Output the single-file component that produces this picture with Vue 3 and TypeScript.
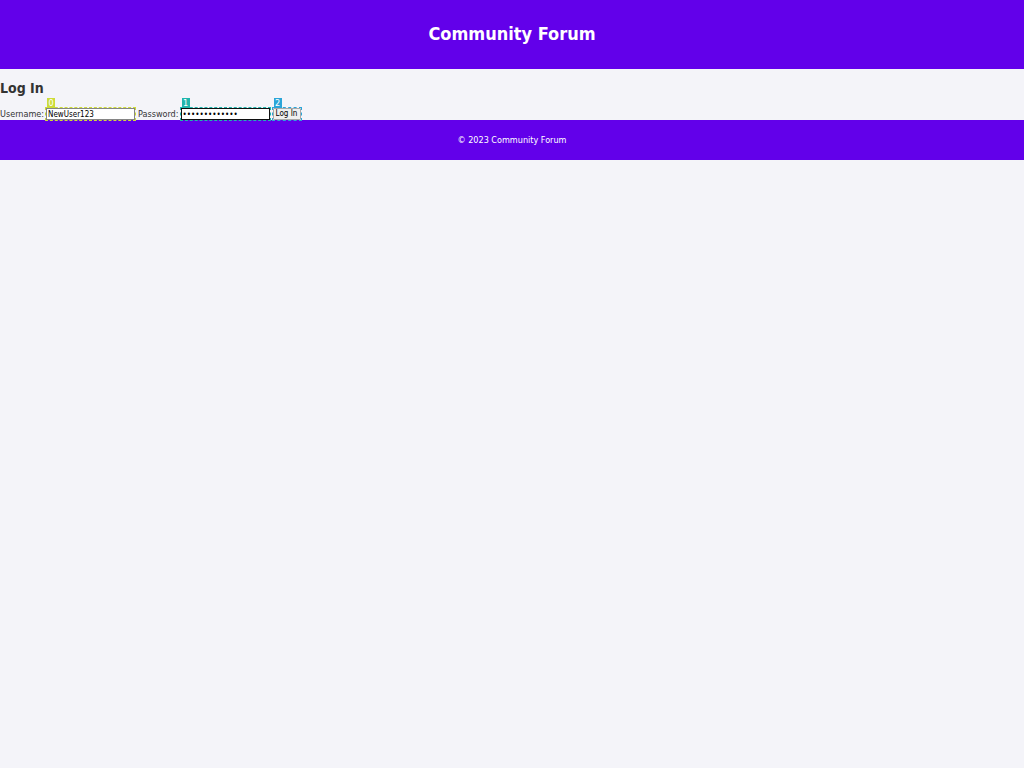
<script setup lang="ts">
import { ref } from 'vue'

const username = ref('NewUser123')
const password = ref('NewPassword12')
</script>

<template>
  <div class="page">
    <header class="banner">
      <h1>Community Forum</h1>
    </header>
    <main>
      <h2>Log In</h2>
      <form class="login" @submit.prevent>
        <label for="username">Username:</label>
        <span class="mark lime">
          <span class="tag">0</span>
          <input id="username" v-model="username" type="text" />
        </span>
        <label for="password">Password:</label>
        <span class="mark teal">
          <span class="tag">1</span>
          <input id="password" v-model="password" class="active" type="password" />
        </span>
        <span class="mark blue">
          <span class="tag">2</span>
          <button type="submit">Log In</button>
        </span>
      </form>
    </main>
    <footer class="banner foot">
      <p>© 2023 Community Forum</p>
    </footer>
  </div>
</template>

<style>
body {
  margin: 0;
  background: #f4f4f9;
}
</style>

<style scoped>
.page {
  font-family: "DejaVu Sans Condensed", "DejaVu Sans", sans-serif;
  font-stretch: condensed;
  font-size: 9px;
  line-height: 12px;
  color: #333;
}
.banner {
  background: #6200ea;
  color: #fff;
  text-align: center;
  padding: 23px 0 25px;
}
h1 {
  margin: 0;
  font-size: 18px;
  line-height: 21px;
}
h2 {
  margin: 0;
  padding: 11px 0 12px;
  font-size: 14px;
  line-height: 16px;
}
.login {
  display: flex;
  align-items: center;
  gap: 2px;
  height: 12px;
}
.mark {
  position: relative;
  display: flex;
  margin-left: -1px;
  border: 1px dashed var(--tone);
}
.lime {
  --tone: #cddc39;
}
.teal {
  --tone: #1fb5ad;
}
.blue {
  --tone: #2ba5d8;
}
.tag {
  position: absolute;
  bottom: 100%;
  left: 1px;
  width: 8px;
  height: 10px;
  background: var(--tone);
  color: #fff;
  font-size: 9px;
  line-height: 10px;
  text-align: center;
}
input,
button {
  box-sizing: border-box;
  height: 12px;
  margin: 0;
  font-family: inherit;
  font-stretch: inherit;
  font-size: 8px;
  line-height: 10px;
  color: #000;
}
input {
  width: 89px;
  padding: 0 1px;
  border: 1px solid #858585;
  background: #fff;
  outline: none;
}
.active {
  border-color: #101010;
}
button {
  width: 28px;
  padding: 0;
  border: 1px solid #a8a8a8;
  border-radius: 1px;
  background: #efefef;
}
.foot {
  padding: 14px 0;
}
.foot p {
  margin: 0;
}
</style>
